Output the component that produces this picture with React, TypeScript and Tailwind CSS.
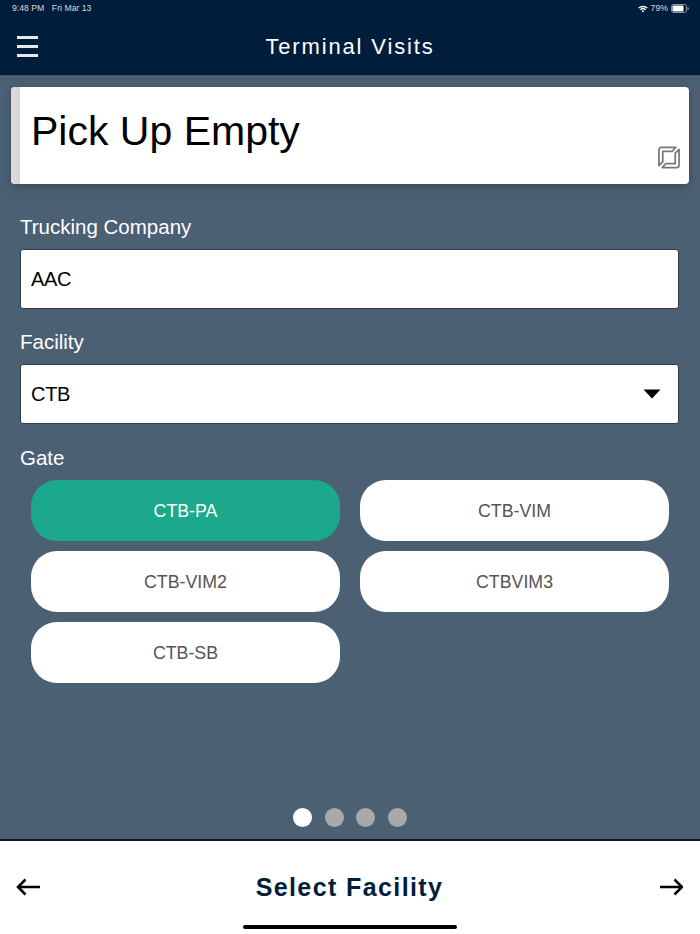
import React from "react";

const sans = "font-['Liberation_Sans',Arial,sans-serif]";

function Pill({ label, active }: { label: string; active?: boolean }) {
  return (
    <div
      className={`h-[61px] pt-[1px] rounded-[26px] flex items-center justify-center text-[17.8px] ${
        active ? "bg-[#1ba88c] text-white" : "bg-white text-[#555555]"
      }`}
    >
      {label}
    </div>
  );
}

function Field({ label, value, caret, mt }: { label: string; value: string; caret?: boolean; mt: string }) {
  return (
    <div className={mt}>
      <div className="text-[20.5px] leading-[21px] text-white">{label}</div>
      <div className="mt-[12px] h-[60px] rounded-[3px] bg-white border border-[#333f4c] flex items-center justify-between pl-[10px] pr-[17px] text-[20px] tracking-[-0.3px] text-black">
        <span>{value}</span>
        {caret && (
          <svg width="18" height="10" viewBox="0 0 18 10" className="mt-[-1px]">
            <path d="M0.5 0.5H17.5L9 9.5Z" fill="#000" />
          </svg>
        )}
      </div>
    </div>
  );
}

export default function App() {
  return (
    <div className={`w-[700px] h-[934px] flex flex-col overflow-hidden bg-[#4c6074] ${sans}`}>
      <header className="h-[76px] bg-[#001e3c] border-b border-[#44566a] shrink-0">
        <div className="h-[18px] pl-[12px] pr-[11px] flex items-center justify-between text-[8.7px] text-[#d5dae0]">
          <div className="flex gap-[7.5px]">
            <span>9:48 PM</span>
            <span>Fri Mar 13</span>
          </div>
          <div className="flex items-center gap-[3px]">
            <svg width="10" height="8" viewBox="0 0 10 8">
              <path d="M0.3 2.6A6.8 6.8 0 0 1 9.7 2.6L8.7 3.6A5.4 5.4 0 0 0 1.3 3.6Z" fill="#fff" />
              <path d="M2 4.2A4.4 4.4 0 0 1 8 4.2L7 5.2A3 3 0 0 0 3 5.2Z" fill="#fff" />
              <path d="M3.7 5.9A1.9 1.9 0 0 1 6.3 5.9L5 7.4Z" fill="#fff" />
            </svg>
            <span>79%</span>
            <svg width="18" height="9" viewBox="0 0 18 9">
              <rect x="0.5" y="0.5" width="15" height="8" rx="2" fill="none" stroke="#8894a2" />
              <rect x="1.5" y="1.5" width="11" height="6" rx="1" fill="#fff" />
              <path d="M16.5 3V6A1.5 1.5 0 0 0 16.5 3Z" fill="#8894a2" />
            </svg>
          </div>
        </div>
        <div className="relative h-[57px] flex items-center justify-center">
          <div className="absolute left-[17px] top-[18px] w-[21px] flex flex-col gap-[6px]">
            <div className="h-[3px] bg-[#e6e9ec]" />
            <div className="h-[3px] bg-[#e6e9ec]" />
            <div className="h-[3px] bg-[#e6e9ec]" />
          </div>
          <div className="text-[22px] tracking-[1.85px] text-white">Terminal Visits</div>
        </div>
      </header>

      <main className="flex-1 flex flex-col min-h-0">
        <div className="mx-[11px] mt-[11px] h-[97px] rounded-[4px] bg-white flex overflow-hidden shadow-[0_3px_8px_rgba(0,0,0,0.25)] relative">
          <div className="w-[9px] bg-[#d9d9d9]" />
          <div className="pl-[11px] pt-[20px] text-[41px] leading-[48px] text-black">Pick Up Empty</div>
          <svg width="24" height="23" viewBox="0 0 24 24" fill="none" stroke="#777777" strokeWidth="1.8" strokeLinejoin="round" className="absolute right-[8px] bottom-[15px]">
            <path d="M1.5 20.5V4A2.5 2.5 0 0 1 4 1.5H19L15.5 5.5H5.5V16.5Z" />
            <path d="M22.5 3.5V20A2.5 2.5 0 0 1 20 22.5H5L8.5 18.5H18.5V7.5Z" />
          </svg>
        </div>

        <div className="pl-[20px] pr-[21px] mt-[32px]">
          <Field label="Trucking Company" value="AAC" mt="" />
          <Field label="Facility" value="CTB" caret mt="mt-[22px]" />
          <div className="mt-[22px] text-[20.5px] leading-[23px] text-white">Gate</div>
        </div>

        <div className="mt-[11px] mx-[31px] grid grid-cols-2 gap-x-[20px] gap-y-[10px]">
          <Pill label="CTB-PA" active />
          <Pill label="CTB-VIM" />
          <Pill label="CTB-VIM2" />
          <Pill label="CTBVIM3" />
          <Pill label="CTB-SB" />
        </div>

        <div className="mt-auto mb-[12px] flex justify-center gap-[12.7px]">
          <div className="w-[19px] h-[19px] rounded-full bg-white" />
          <div className="w-[19px] h-[19px] rounded-full bg-[#a9a9a9]" />
          <div className="w-[19px] h-[19px] rounded-full bg-[#a9a9a9]" />
          <div className="w-[19px] h-[19px] rounded-full bg-[#a9a9a9]" />
        </div>
      </main>

      <footer className="relative h-[95px] shrink-0 bg-white border-t-2 border-[#111820] flex items-center justify-between pl-[16px] pr-[17px]">
        <svg width="25" height="18" viewBox="0 0 25 18" fill="none" stroke="#000" strokeWidth="2.5" className="mb-[2px]">
          <path d="M24 9H2M9.5 1.5L2 9L9.5 16.5" />
        </svg>
        <div className="text-[25px] font-bold tracking-[1.4px] text-[#001e3c]">Select Facility</div>
        <svg width="25" height="18" viewBox="0 0 25 18" fill="none" stroke="#000" strokeWidth="2.5" className="mb-[2px]">
          <path d="M2 9H24M16.5 1.5L24 9L16.5 16.5" />
        </svg>
        <div className="absolute left-[243px] top-[84px] w-[214px] h-[4px] rounded-full bg-black" />
      </footer>
    </div>
  );
}
